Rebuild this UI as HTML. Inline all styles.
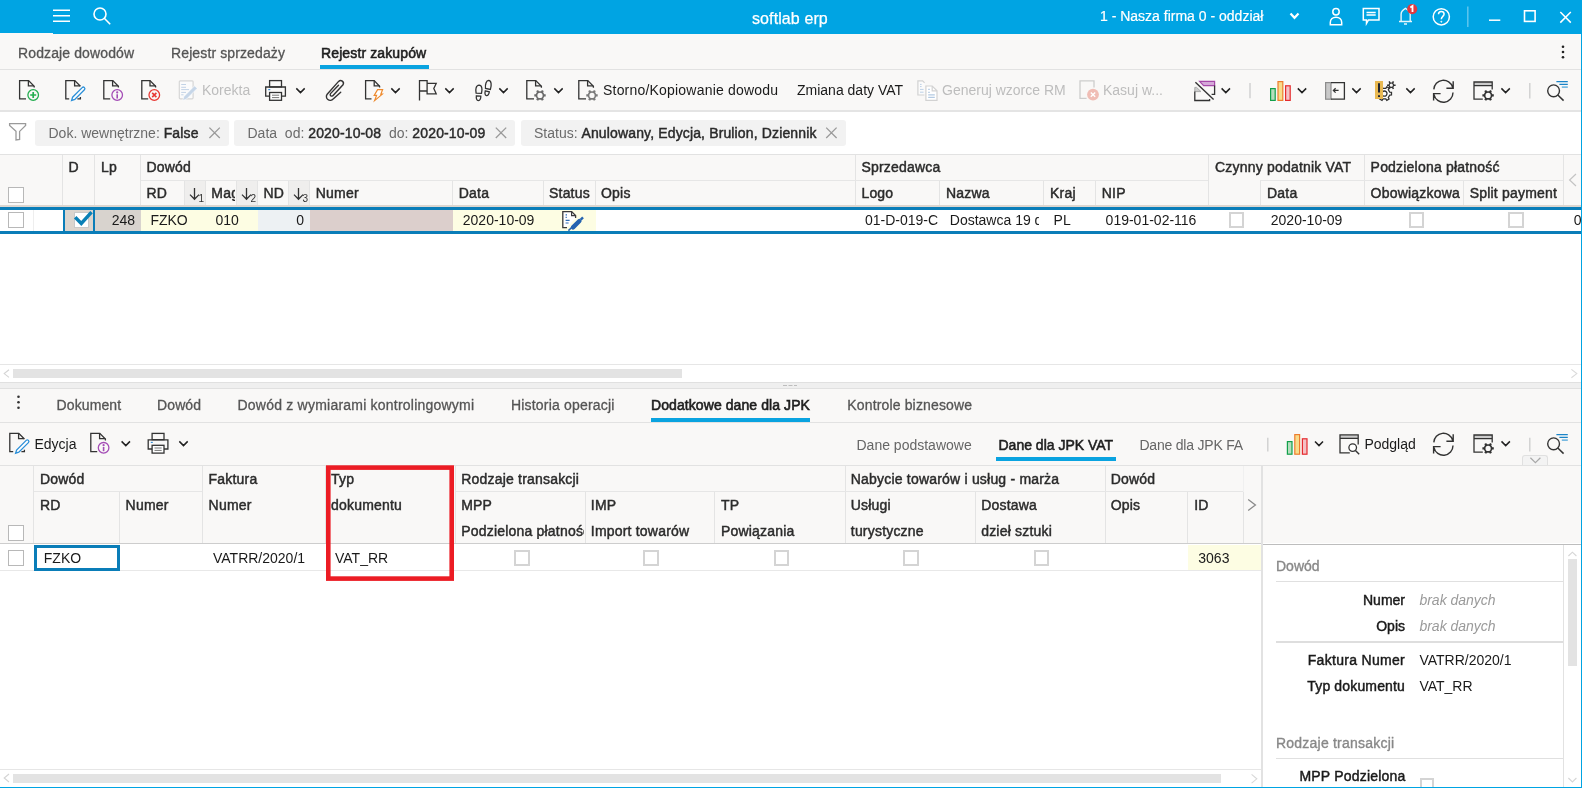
<!DOCTYPE html>
<html><head><meta charset="utf-8">
<style>
*{margin:0;padding:0;box-sizing:border-box}
html,body{width:1582px;height:788px;overflow:hidden;background:#fff}
body{will-change:transform}
body{position:relative;font-family:"Liberation Sans",sans-serif;font-size:14px;color:#1a1a1a}
.a{position:absolute}
.t{position:absolute;white-space:nowrap;line-height:16px;font-size:14px}
.m{-webkit-text-stroke:0.45px currentColor}
.hl{position:absolute;height:1px;background:#dedede}
.vl{position:absolute;width:1px;background:#e4e4e4}
.cb{position:absolute;width:16px;height:16px;border:2px solid #cfcfcf;background:#fff}
svg{position:absolute;overflow:visible}
</style></head><body>

<!-- TOP BAR -->
<div class="a" style="left:0;top:0;width:1582px;height:34px;background:#00a4e3"></div>
<div class="a" style="left:0;top:33px;width:53px;height:1px;background:#f9f8f7"></div>
<svg style="left:0;top:0" width="1582" height="34" fill="none" stroke="#fff" stroke-width="1.6">
 <path d="M53 10.2H70M53 15.8H70M53 21.3H70"/>
 <circle cx="100" cy="14" r="6"/><path d="M104.3 18.3L110.2 24.2"/>
 <path d="M1290.5 13.5L1294.5 17.8L1298.5 13.5" stroke-width="2.2"/>
 <circle cx="1336" cy="11.8" r="3.2" stroke-width="1.5"/>
 <path d="M1330.3 24.8V22.5C1330.3 19.2 1332.8 17.2 1336 17.2S1341.7 19.2 1341.7 22.5V24.8Z" stroke-width="1.5"/>
 <path d="M1363.3 8.5H1379V20H1368.5L1366.5 23.5V20H1363.3Z" stroke-width="1.5"/>
 <path d="M1366.5 12.5H1375.7M1366.5 15H1375.7" stroke-width="1.5"/>
 <path d="M1399 21.5H1412M1401.1 21.5V14.2C1401.1 11.6 1402.6 10 1405.4 8.4C1408.2 10 1410.2 11.6 1410.2 14.2V21.5M1404 24H1407" stroke-width="1.4" stroke="#e6f6fc"/>
 <circle cx="1441.3" cy="16.8" r="8.1" stroke-width="1.5"/>
 <path d="M1438.5 14.3C1438.5 12.6 1439.8 11.4 1441.3 11.4S1444.1 12.5 1444.1 14.1C1444.1 16.4 1441.3 16.5 1441.3 19.2" stroke-width="1.5"/>
 <circle cx="1441.3" cy="21.7" r="0.5" fill="#fff" stroke-width="1"/>
 <path d="M1467.8 6.5V27" stroke="#5fc6ee" stroke-width="1.5"/>
 <path d="M1489 20.2H1500.3" stroke-width="1.5"/>
 <rect x="1524.5" y="10.8" width="10.6" height="10.6" stroke-width="1.6"/>
 <path d="M1560.3 12L1570.8 22.6M1570.8 12L1560.3 22.6" stroke-width="1.5"/>
</svg>
<svg style="left:0;top:0" width="1582" height="34">
 <circle cx="1412.2" cy="9.1" r="5.1" fill="#e0393e"/>
 <path d="M1410.3 7.4L1412.5 6V12" fill="none" stroke="#fff" stroke-width="1.8"/>
</svg>
<div class="t" style="left:752px;top:9.5px;font-size:16px;line-height:18px;color:#fff;letter-spacing:0.1px;-webkit-text-stroke:0.25px #fff">softlab erp</div>
<div class="t m" style="left:1100px;top:8px;color:#fff;-webkit-text-stroke:0.2px #fff">1 - Nasza firma 0 - oddział</div>

<!-- TAB BAR 1 -->
<div class="a" style="left:0;top:34px;width:1581px;height:36px;background:#f9f8f7"></div>
<div class="hl" style="left:0;top:69px;width:1581px;background:#e2e2e2"></div>
<div class="t" style="left:18px;top:45px;color:#555;letter-spacing:0.12px;-webkit-text-stroke:0.3px #555">Rodzaje dowodów</div>
<div class="t" style="left:171px;top:45px;color:#555;letter-spacing:0.12px;-webkit-text-stroke:0.3px #555">Rejestr sprzedaży</div>
<div class="t m" style="left:321px;top:45px;color:#1e1e1e;-webkit-text-stroke:0.55px #1e1e1e;letter-spacing:0.12px">Rejestr zakupów</div>
<div class="a" style="left:320px;top:65px;width:109px;height:4px;background:#0aa3e0"></div>

<!-- TOOLBAR 1 -->
<div class="a" style="left:0;top:70px;width:1581px;height:40px;background:#f9f8f7"></div>
<div class="a" style="left:0;top:110px;width:1581px;height:2px;background:#e4e4e4"></div>
<svg style="left:0;top:0;width:0;height:0">
 <defs>
  <path id="dfold" d="M9.4 0.6V5.8H15" />
  <g id="gear"><path fill-rule="evenodd" stroke="none" d="M4.24 -1.16 L5.70 -1.06 L5.70 1.06 L4.24 1.16 L3.13 3.09 L3.77 4.41 L1.94 5.47 L1.12 4.26 L-1.12 4.26 L-1.94 5.47 L-3.77 4.41 L-3.13 3.09 L-4.24 1.16 L-5.70 1.06 L-5.70 -1.06 L-4.24 -1.16 L-3.13 -3.09 L-3.77 -4.41 L-1.94 -5.47 L-1.12 -4.26 L1.12 -4.26 L1.94 -5.47 L3.77 -4.41 L3.13 -3.09ZM2.60 0.00A2.6 2.6 0 1 0 -2.60 0.00A2.6 2.6 0 1 0 2.60 0.00Z"/></g>
 </defs>
</svg>
<svg style="left:0;top:70px" width="1582" height="42" fill="none" stroke="#333" stroke-width="1.3">
 <g transform="translate(0,-70)">
 <!-- new doc -->
 <g transform="translate(19,80)"><path d="M7 18.8H0.6V0.6H9.6L15.2 6.2V7.6"/><use href="#dfold"/></g>
 <circle cx="33.2" cy="95" r="5.3" stroke="#22ad4f" stroke-width="1.3"/>
 <path d="M30.2 95H36.2M33.2 92V98" stroke="#22ad4f" stroke-width="1.7"/>
 <!-- edit doc -->
 <g transform="translate(65.2,80)"><path d="M4 18.8H0.6V0.6H9.6L15.2 6.2"/><use href="#dfold"/><path d="M12.2 18.8H15.2V17"/></g>
 <path d="M71.6 100.4L72.6 97.2L82.2 87.6A1.3 1.3 0 0 1 84.4 89.8L74.8 99.4Z" stroke="#2b8fd8" stroke-width="1.3" fill="#fff"/>
 <!-- info doc -->
 <g transform="translate(103.2,80)"><path d="M7 18.8H0.6V0.6H9.6L15.2 6.2V7.6"/><use href="#dfold"/></g>
 <circle cx="117.2" cy="95" r="5.3" stroke="#a44db6"/>
 <path d="M117.2 94.2V98.4" stroke="#a44db6" stroke-width="1.6"/><circle cx="117.2" cy="92.4" r="0.5" stroke="#a44db6" stroke-width="1.2"/>
 <!-- delete doc -->
 <g transform="translate(141.2,80)"><path d="M7 18.8H0.6V0.6H8.8L14.4 6.2V7.6"/><path d="M8.8 0.6V5.8H14.4"/></g>
 <circle cx="154.3" cy="95" r="5.3" stroke="#e83a35"/>
 <path d="M152.2 92.9L156.4 97.1M156.4 92.9L152.2 97.1" stroke="#e83a35" stroke-width="1.6"/>
 <!-- korekta -->
 <rect x="179.3" y="80.8" width="13.8" height="18" rx="1" stroke="#d6d6d6" stroke-width="1.2" fill="#fbfbfb"/>
 <path d="M181.2 84.5H186M181.2 87.3H186M181.2 89.6H189M181.2 92.4H186M181.2 94.8H183.5" stroke="#c3d3e6" stroke-width="1"/>
 <path d="M182.6 100.6L184 96.4L194.6 85.8L197.2 88.4L186.6 99Z" fill="#c6d6e8" stroke="#fff" stroke-width="0.6"/>
 <!-- printer -->
 <rect x="269.6" y="80.6" width="11.9" height="6.3"/>
 <path d="M269.6 96.2H265.7V87H285.4V96.2H281.5"/>
 <rect x="269.6" y="92.5" width="11.9" height="7.8" fill="#fff"/>
 <path d="M272 95.2H279.2M272 97.6H279.2" stroke="#777" stroke-width="1"/>
 <path d="M268.3 89.6H270.3" stroke="#3a8fd6" stroke-width="1.2"/>
 <!-- paperclip -->
 <path d="M340.7 92.3L333.2 98.9A3.8 3.8 0 0 1 327.2 94.2L338.6 81.4A2.8 2.8 0 0 1 343 84.8L333.1 95.5A1.6 1.6 0 0 1 330.5 93.6L338.5 85.3" stroke-width="1.4" stroke-linecap="round"/>
 <!-- doc lightning -->
 <g transform="translate(365,80)"><path d="M6.5 18.8H0.6V0.6H9.2L14.6 6.2V7.6"/><path d="M9.2 0.6V5.8H14.6"/></g>
 <path d="M377.6 89.6H382.6L380.8 94.2H382.3L374.6 100.6L376.6 95.4H374.2Z" stroke="#ee8a2e" stroke-width="1.2" fill="#fff"/>
 <!-- flag -->
 <path d="M419.5 100.6V80.6H427.1V91H419.5M427.1 83.4H436.2L433.8 88.6L436.2 93.8H427.1V91"/>
 <!-- footprints -->
 <path d="M476.1 93.2C475.3 89.6 475.9 85.4 479.1 85.2C482.1 85.2 482.5 89.4 481.5 93.4Z"/>
 <path d="M476.4 95.8L480.8 96.2C480.9 98.6 480 100.6 478.4 100.6C476.6 100.6 476 98.2 476.4 95.8Z"/>
 <path d="M485.5 88.4C485.1 84.6 486.1 80.6 488.7 80.4C491.5 80.6 491.7 85.4 490.4 89.4Z"/>
 <path d="M485.3 90.8L489.3 91.8C489.1 94.2 488 95.8 486.4 95.6C484.8 95.4 484.7 93 485.3 90.8Z"/>
 <!-- doc gear -->
 <g transform="translate(526.2,80)"><path d="M7.8 18.8H0.6V0.6H9.6L15.2 6.2V7.8"/><use href="#dfold"/></g>
 <g transform="translate(540,95.4)" fill="#6a6a6a"><use href="#gear"/></g>
 <!-- doc gear 2 -->
 <g transform="translate(578.2,80)"><path d="M7.8 18.8H0.6V0.6H9.6L15.2 6.2V7.8"/><use href="#dfold"/></g>
 <g transform="translate(592,95.4)" fill="#7a7a7a"><use href="#gear"/></g>
 <!-- chevrons -->
 <path d="M296.3 88.4L300.5 92.6L304.7 88.4M391.3 88.4L395.5 92.6L399.7 88.4M445.3 88.4L449.5 92.6L453.7 88.4M499.3 88.4L503.5 92.6L507.7 88.4M554.3 88.4L558.5 92.6L562.7 88.4M1221.6 88.4L1225.8 92.6L1230 88.4M1297.8 88.4L1302 92.6L1306.2 88.4M1352.3 88.4L1356.5 92.6L1360.7 88.4M1406.3 88.4L1410.5 92.6L1414.7 88.4M1501.4 88.4L1505.6 92.6L1509.8 88.4" stroke="#222" stroke-width="1.5"/>
 <!-- generuj -->
 <path d="M924.4 95H917.9V80.8H922.6L924.6 82.8" stroke="#d2d2d2" stroke-width="1.2" fill="#fbfbfb"/>
 <path d="M920 84.4H921.6M920 86.6H921.6M920 89.4H923.6M920 92.2H923.6" stroke="#bcd0e6" stroke-width="1"/>
 <path d="M925.9 100.3V86H932.2L937 90.8V100.3Z" stroke="#d2d2d2" stroke-width="1.2" fill="#fff"/>
 <path d="M932.2 86V90.8H937" stroke="#d2d2d2" stroke-width="1.2"/>
 <path d="M928.2 89.4H929.8M928.2 92.4H929.8M928.2 94.8H934.8M928.2 97.4H934.8" stroke="#b4cae2" stroke-width="1.2"/>
 <!-- kasuj -->
 <path d="M1086.6 98.4H1080V80.8H1094V87.4" stroke="#cdcdcd" stroke-width="1.3"/>
 <circle cx="1093" cy="94.6" r="5.9" fill="#f0bdb5" stroke="none"/>
 <path d="M1090.8 92.4L1095.2 96.8M1095.2 92.4L1090.8 96.8" stroke="#fff" stroke-width="1.4"/>
 <!-- calendar slash -->
 <path d="M1199.6 81.4H1214.6V85.6H1203.6Z" fill="#d5a9d8" stroke="#a64aa9" stroke-width="1.2"/>
 <path d="M1214.6 85.6V94.4H1211.6" stroke-width="1.3"/>
 <path d="M1194.8 87.4H1196.6L1201 91.6H1194.8Z" fill="#ccc" stroke="#aaa" stroke-width="1"/>
 <path d="M1194.8 91.6V100.5H1209.6V99" stroke-width="1.3"/>
 <path d="M1195.4 82.2L1213.6 99.6" stroke-width="1.4"/>
 <!-- separators -->
 <path d="M1250 83V98.2M1529.8 83V98.6" stroke="#cfcfcf" stroke-width="1.4"/>
 <!-- chart -->
 <rect x="1270.6" y="88.6" width="4.6" height="11.8" fill="#b6ddbd" stroke="#12a04b" stroke-width="1.2"/>
 <rect x="1278" y="81.6" width="4.8" height="18.8" fill="#f8dc8a" stroke="#ed7d2e" stroke-width="1.2"/>
 <rect x="1285.6" y="85.8" width="4.6" height="14.6" fill="#f4c1c4" stroke="#e52a2e" stroke-width="1.2"/>
 <!-- panel -->
 <rect x="1325.6" y="82.6" width="5.4" height="16.6" fill="#c9c9c9" stroke="#8c8c8c" stroke-width="1.2"/>
 <path d="M1331 82.6H1344.4V99.2H1331" stroke="#333" stroke-width="1.3"/>
 <path d="M1333.6 90.4H1338.6M1335.6 88.2L1333.4 90.4L1335.6 92.6" stroke="#333" stroke-width="1.3"/>
 <!-- alert gear -->
 <g transform="translate(1384.4,93.6)" stroke="#333" stroke-width="1.3" fill="#fff"><path d="M5.31 -1.45 L7.08 -1.31 L7.08 1.31 L5.31 1.45 L3.91 3.87 L4.68 5.47 L2.40 6.79 L1.40 5.32 L-1.40 5.32 L-2.40 6.79 L-4.68 5.47 L-3.91 3.87 L-5.31 1.45 L-7.08 1.31 L-7.08 -1.31 L-5.31 -1.45 L-3.91 -3.87 L-4.68 -5.47 L-2.40 -6.79 L-1.40 -5.32 L1.40 -5.32 L2.40 -6.79 L4.68 -5.47 L3.91 -3.87Z"/><circle r="2.6"/></g>
 <g transform="translate(1391.3,85.2)" fill="#333"><path fill-rule="evenodd" d="M2.80 -0.77 L4.33 -0.80 L4.33 0.80 L2.80 0.77 L2.06 2.04 L2.86 3.35 L1.47 4.15 L0.74 2.81 L-0.74 2.81 L-1.47 4.15 L-2.86 3.35 L-2.06 2.04 L-2.80 0.77 L-4.33 0.80 L-4.33 -0.80 L-2.80 -0.77 L-2.06 -2.04 L-2.86 -3.35 L-1.47 -4.15 L-0.74 -2.81 L0.74 -2.81 L1.47 -4.15 L2.86 -3.35 L2.06 -2.04ZM1.60 0.00A1.6 1.6 0 1 0 -1.60 0.00A1.6 1.6 0 1 0 1.60 0.00Z" stroke="none"/></g>
 <rect x="1375" y="81" width="8" height="18" fill="#e9b952" stroke="none"/>
 <path d="M1379 83.2V92.4M1379 95.2V97" stroke="#1e2433" stroke-width="2"/>
 <!-- refresh -->
 <path d="M1433.8 89.4A9.6 9.6 0 0 1 1452.6 87.2M1453.2 81.2V88.2H1446.4" stroke-width="1.4"/>
 <path d="M1453 92.6A9.6 9.6 0 0 1 1434 94.6M1433.6 100.6V93.6H1440.6" stroke-width="1.4"/>
 <!-- window gear -->
 <rect x="1474" y="82" width="18.2" height="3.6" fill="#cbcbcb" stroke="none"/>
 <path d="M1482.8 99.2H1474V82H1492.2V89.4M1474 85.6H1492.2" stroke-width="1.3"/>
 <g transform="translate(1488.1,95.4)" fill="#333"><use href="#gear"/></g>
 <!-- search filter -->
 <circle cx="1553.6" cy="90.8" r="5.9" stroke-width="1.4"/>
 <path d="M1557.8 95L1563.6 100.6" stroke-width="1.5"/>
 <path d="M1556.4 81.6H1567.8M1559.4 84.4H1567.8" stroke="#1a84c8" stroke-width="1.3"/>
 <path d="M1561.8 87.1H1567.8" stroke="#4ea6da" stroke-width="1.3"/>
 </g>
</svg>
<div class="t" style="left:202px;top:82px;color:#bdbdbd">Korekta</div>
<div class="t" style="left:603px;top:82px;color:#1a1a1a;letter-spacing:0.2px">Storno/Kopiowanie dowodu</div>
<div class="t" style="left:797px;top:82px;color:#1a1a1a">Zmiana daty VAT</div>
<div class="t" style="left:942px;top:82px;color:#bdbdbd">Generuj wzorce RM</div>
<div class="t" style="left:1103px;top:82px;color:#bdbdbd">Kasuj w...</div>

<!-- kebab 1 -->
<svg style="left:1560px;top:44px" width="6" height="16"><circle cx="3" cy="2.8" r="1.3" fill="#222"/><circle cx="3" cy="8" r="1.3" fill="#222"/><circle cx="3" cy="13.2" r="1.3" fill="#222"/></svg>

<!-- FILTER BAR -->
<div class="hl" style="left:0;top:154px;width:1581px;background:#e2e2e2"></div>
<svg style="left:0;top:112px" width="30" height="40" fill="none" stroke="#9a9a9a" stroke-width="1.3">
 <path d="M9.6 11.6H25.6V13.4L19.6 19.4V27.4L16 28V19.4L9.6 13.4Z"/>
</svg>
<div class="a" style="left:35px;top:120px;width:194px;height:26px;background:#f2f2f2;border-radius:3px"></div>
<div class="a" style="left:234px;top:120px;width:281px;height:26px;background:#f2f2f2;border-radius:3px"></div>
<div class="a" style="left:521px;top:120px;width:325px;height:26px;background:#f2f2f2;border-radius:3px"></div>
<div class="t" style="left:48.5px;top:125px;color:#6b6b6b">Dok. wewnętrzne: <span class="m" style="color:#2a2a2a;letter-spacing:0.14px">False</span></div>
<div class="t" style="left:247.5px;top:125px;color:#6b6b6b">Data&nbsp; od: <span class="m" style="color:#2a2a2a;letter-spacing:0.14px">2020-10-08</span>&nbsp; do: <span class="m" style="color:#2a2a2a;letter-spacing:0.14px">2020-10-09</span></div>
<div class="t" style="left:534px;top:125px;color:#6b6b6b">Status: <span class="m" style="color:#2a2a2a;letter-spacing:0.14px">Anulowany, Edycja, Brulion, Dziennik</span></div>
<svg style="left:0;top:112px" width="900" height="40" fill="none" stroke="#9a9a9a" stroke-width="1.3">
 <path d="M209.4 15.6L219.8 26M219.8 15.6L209.4 26M495.8 15.6L506.2 26M506.2 15.6L495.8 26M826.2 15.6L836.6 26M836.6 15.6L826.2 26"/>
</svg>

<!-- GRID 1 -->
<div class="a" style="left:0;top:155px;width:1581px;height:51px;background:#f9f8f7"></div>
<div class="a" style="left:184px;top:181px;width:21px;height:24px;background:#efeeed"></div>
<div class="a" style="left:236px;top:181px;width:21px;height:24px;background:#efeeed"></div>
<div class="a" style="left:288px;top:181px;width:21px;height:24px;background:#efeeed"></div>
<div class="a" style="left:0;top:205px;width:1581px;height:2px;background:#dcd6d0"></div>
<!-- header lines -->
<div class="vl" style="left:62px;top:155px;height:50px"></div>
<div class="vl" style="left:94px;top:155px;height:50px"></div>
<div class="vl" style="left:140px;top:155px;height:50px"></div>
<div class="vl" style="left:855px;top:155px;height:50px"></div>
<div class="vl" style="left:1208px;top:155px;height:50px"></div>
<div class="vl" style="left:1364px;top:155px;height:50px"></div>
<div class="vl" style="left:1563px;top:155px;height:50px"></div>
<div class="hl" style="left:141px;top:180px;width:1067px;background:#e6e6e6"></div>
<div class="hl" style="left:1260px;top:180px;width:303px;background:#e6e6e6"></div>
<div class="vl" style="left:184px;top:181px;height:24px"></div>
<div class="vl" style="left:205px;top:181px;height:24px"></div>
<div class="vl" style="left:236px;top:181px;height:24px"></div>
<div class="vl" style="left:257px;top:181px;height:24px"></div>
<div class="vl" style="left:288px;top:181px;height:24px"></div>
<div class="vl" style="left:309px;top:181px;height:24px"></div>
<div class="vl" style="left:452px;top:181px;height:24px"></div>
<div class="vl" style="left:543px;top:181px;height:24px"></div>
<div class="vl" style="left:595px;top:181px;height:24px"></div>
<div class="vl" style="left:939px;top:181px;height:24px"></div>
<div class="vl" style="left:1043px;top:181px;height:24px"></div>
<div class="vl" style="left:1095px;top:181px;height:24px"></div>
<div class="vl" style="left:1260px;top:181px;height:24px"></div>
<div class="vl" style="left:1463px;top:181px;height:24px"></div>
<div class="cb" style="left:8px;top:187px;border-width:1.5px;border-color:#b8b8b8"></div>
<!-- header text -->
<div class="t m" style="left:68.5px;top:159px;color:#2b2b2b;letter-spacing:0.2px">D</div>
<div class="t m" style="left:101px;top:159px;color:#2b2b2b;letter-spacing:0.2px">Lp</div>
<div class="t m" style="left:146.4px;top:159px;color:#2b2b2b;letter-spacing:0.2px">Dowód</div>
<div class="t m" style="left:861.4px;top:159px;color:#2b2b2b;letter-spacing:0.2px">Sprzedawca</div>
<div class="t m" style="left:1215px;top:159px;color:#2b2b2b;letter-spacing:0.2px">Czynny podatnik VAT</div>
<div class="t m" style="left:1370.6px;top:159px;color:#2b2b2b;letter-spacing:0.2px">Podzielona płatność</div>
<div class="t m" style="left:146.4px;top:185px;color:#2b2b2b;letter-spacing:0.2px">RD</div>
<div class="t m" style="left:211.3px;top:185px;color:#2b2b2b;letter-spacing:0.2px;width:24px;overflow:hidden">Mag</div>
<div class="t m" style="left:263.5px;top:185px;color:#2b2b2b;letter-spacing:0.2px">ND</div>
<div class="t m" style="left:315.8px;top:185px;color:#2b2b2b;letter-spacing:0.2px">Numer</div>
<div class="t m" style="left:458.8px;top:185px;color:#2b2b2b;letter-spacing:0.2px">Data</div>
<div class="t m" style="left:549px;top:185px;color:#2b2b2b;letter-spacing:0.2px">Status</div>
<div class="t m" style="left:601px;top:185px;color:#2b2b2b;letter-spacing:0.2px">Opis</div>
<div class="t m" style="left:861.4px;top:185px;color:#2b2b2b;letter-spacing:0.2px">Logo</div>
<div class="t m" style="left:946px;top:185px;color:#2b2b2b;letter-spacing:0.2px">Nazwa</div>
<div class="t m" style="left:1050px;top:185px;color:#2b2b2b;letter-spacing:0.2px">Kraj</div>
<div class="t m" style="left:1101.8px;top:185px;color:#2b2b2b;letter-spacing:0.2px">NIP</div>
<div class="t m" style="left:1267px;top:185px;color:#2b2b2b;letter-spacing:0.2px">Data</div>
<div class="t m" style="left:1370.6px;top:185px;color:#2b2b2b;letter-spacing:0.2px">Obowiązkowa</div>
<div class="t m" style="left:1469.7px;top:185px;color:#2b2b2b;letter-spacing:0.2px">Split payment</div>
<svg style="left:0;top:150px" width="1582" height="60" fill="none" stroke="#333" stroke-width="1.3">
 <g transform="translate(0,-150)">
 <path d="M194.5 188V199M190 194.6L194.5 199.2L199 194.6M246.5 188V199M242 194.6L246.5 199.2L251 194.6M298.5 188V199M294 194.6L298.5 199.2L303 194.6"/>
 <path d="M1576 174L1569.6 180L1576 186" stroke="#c4c4c4" stroke-width="1.2"/>
 </g>
</svg>
<div class="a" style="left:198.5px;top:193px;font-size:10px;line-height:12px;color:#333">1</div>
<div class="a" style="left:250.5px;top:193px;font-size:10px;line-height:12px;color:#333">2</div>
<div class="a" style="left:302.5px;top:193px;font-size:10px;line-height:12px;color:#333">3</div>

<!-- ROW 1 -->
<div class="a" style="left:33px;top:210px;width:1px;height:21px;background:#eee"></div>
<div class="cb" style="left:8px;top:212px;border-width:1.5px;border-color:#b8b8b8"></div>
<div class="a" style="left:65px;top:210px;width:28px;height:21px;background:#dcd5ce"></div>
<div class="a" style="left:95px;top:210px;width:45.5px;height:21px;background:#d8d3ce"></div>
<div class="a" style="left:140.5px;top:210px;width:117px;height:21px;background:#fdfde3"></div>
<div class="a" style="left:257.5px;top:210px;width:52px;height:21px;background:#edf1f3"></div>
<div class="a" style="left:309.5px;top:210px;width:143px;height:21px;background:#dccfcc"></div>
<div class="a" style="left:452.5px;top:210px;width:143px;height:21px;background:#fdfde3"></div>
<div class="a" style="left:0;top:207px;width:1581px;height:3px;background:#0a7db8"></div>
<div class="a" style="left:0;top:231px;width:1581px;height:3px;background:#0a7db8"></div>
<div class="a" style="left:63px;top:210px;width:2px;height:21px;background:#0a7db8"></div>
<div class="a" style="left:93px;top:210px;width:2px;height:21px;background:#0a7db8"></div>
<div class="cb" style="left:73.5px;top:212px;width:15.5px;height:15.8px;border-width:1.5px;border-color:#c9c9c9"></div>
<svg style="left:60px;top:204px" width="40" height="32"><path d="M76.4 218.4L81.3 223.4L90.4 213.4" transform="translate(-60,-204)" fill="none" stroke="#0a80b6" stroke-width="3.4" stroke-linecap="square"/></svg>
<div class="t" style="left:95px;top:212px;width:40px;text-align:right;color:#1a1a1a">248</div>
<div class="t" style="left:150.4px;top:212px;color:#1a1a1a">FZKO</div>
<div class="t" style="left:215.5px;top:212px;color:#1a1a1a">010</div>
<div class="t" style="left:264px;top:212px;width:40px;text-align:right;color:#1a1a1a">0</div>
<div class="t" style="left:462.8px;top:212px;color:#1a1a1a">2020-10-09</div>
<svg style="left:550px;top:204px" width="50" height="32" fill="none">
 <g transform="translate(-550,-204)">
 <path d="M567 227.6H562.8V211.6H571.6L575.6 215.6V218" stroke="#3a3a3a" stroke-width="1.3" fill="#fff"/>
 <path d="M571.6 211.6V215.6H575.6" stroke="#3a3a3a" stroke-width="1.2"/>
 <path d="M565.6 214.8H567M565.6 217.4H566.8M565.6 220.4H569.6M565.6 223H568.6" stroke="#2e6bb5" stroke-width="1.2"/>
 <path d="M573 227.4L579.4 221" stroke="#2563b0" stroke-width="4.4" stroke-linecap="round"/>
 <path d="M568.4 230.6L572.2 227" stroke="#2563b0" stroke-width="1.5"/>
 <path d="M580.8 219.6L583 217.4" stroke="#2563b0" stroke-width="2.4"/>
 </g>
</svg>
<div class="t" style="left:865px;top:212px;color:#1a1a1a">01-D-019-C</div>
<div class="t" style="left:949.8px;top:212px;width:89px;overflow:hidden;color:#1a1a1a">Dostawca 19 d</div>
<div class="t" style="left:1053.6px;top:212px;color:#1a1a1a">PL</div>
<div class="t" style="left:1105.6px;top:212px;color:#1a1a1a">019-01-02-116</div>
<div class="cb" style="left:1228.5px;top:212px;width:15.5px;height:15.5px;border-width:2px;border-color:#d4d4d4"></div>
<div class="t" style="left:1270.8px;top:212px;color:#1a1a1a">2020-10-09</div>
<div class="cb" style="left:1408.5px;top:212px;width:15.5px;height:15.5px;border-width:2px;border-color:#d4d4d4"></div>
<div class="cb" style="left:1508.3px;top:212px;width:15.5px;height:15.5px;border-width:2px;border-color:#d4d4d4"></div>
<div class="t" style="left:1573.7px;top:212px;width:7px;overflow:hidden;color:#1a1a1a">0</div>

<!-- SCROLL 1 -->
<div class="hl" style="left:0;top:364px;width:1581px;background:#e6e6e6"></div>
<div class="a" style="left:13px;top:369px;width:669px;height:9px;background:#e3e3e3"></div>
<div class="hl" style="left:0;top:382px;width:1581px;background:#e0e0e0"></div>
<div class="a" style="left:0;top:383px;width:1581px;height:5px;background:#efefef"></div>
<div class="hl" style="left:0;top:388px;width:1581px;background:#e0e0e0"></div>

<!-- TAB BAR 2 -->
<div class="a" style="left:0;top:389px;width:1581px;height:33px;background:#f9f8f7"></div>
<div class="hl" style="left:0;top:422px;width:1581px;background:#e2e2e2"></div>

<svg style="left:0;top:360px" width="1582" height="60">
 <g transform="translate(0,-360)">
 <path d="M9 369.8L4.2 373.6L9 377.4" fill="none" stroke="#d4d4d4" stroke-width="1.1"/>
 <path d="M1571.4 369.4L1576.8 373.6L1571.4 377.8" fill="none" stroke="#dadada" stroke-width="1.1"/>
 <path d="M783 385.5H787M788.5 385.5H792.5M794 385.5H797" stroke="#bdbdbd" stroke-width="1"/>
 <circle cx="18.5" cy="396.8" r="1.3" fill="#333"/><circle cx="18.5" cy="402.2" r="1.3" fill="#333"/><circle cx="18.5" cy="407.7" r="1.3" fill="#333"/>
 </g>
</svg>
<div class="t" style="left:56.5px;top:397px;color:#555;letter-spacing:0.12px;-webkit-text-stroke:0.3px #555">Dokument</div>
<div class="t" style="left:157px;top:397px;color:#555;letter-spacing:0.12px;-webkit-text-stroke:0.3px #555">Dowód</div>
<div class="t" style="left:237.5px;top:397px;color:#555;letter-spacing:0.22px;-webkit-text-stroke:0.3px #555">Dowód z wymiarami kontrolingowymi</div>
<div class="t" style="left:511px;top:397px;color:#555;letter-spacing:0.19px;-webkit-text-stroke:0.3px #555">Historia operacji</div>
<div class="t m" style="left:651px;top:397px;color:#1e1e1e;-webkit-text-stroke:0.6px #1e1e1e;letter-spacing:0.08px">Dodatkowe dane dla JPK</div>
<div class="t" style="left:847.3px;top:397px;color:#555;letter-spacing:0.15px;-webkit-text-stroke:0.3px #555">Kontrole biznesowe</div>
<div class="a" style="left:651px;top:418px;width:159px;height:4px;background:#0aa3e0"></div>

<!-- TOOLBAR 2 -->
<div class="a" style="left:0;top:423px;width:1581px;height:42px;background:#f9f8f7"></div>
<div class="hl" style="left:0;top:465px;width:1581px;background:#e2e2e2"></div>
<div class="t" style="left:34.4px;top:436px;color:#1a1a1a">Edycja</div>
<div class="t" style="left:856.5px;top:437px;color:#666">Dane podstawowe</div>
<div class="t m" style="left:998.5px;top:437px;color:#1e1e1e;-webkit-text-stroke:0.55px #1e1e1e">Dane dla JPK VAT</div>
<div class="a" style="left:996px;top:457px;width:120px;height:4px;background:#0aa3e0"></div>
<div class="t" style="left:1139.4px;top:437px;color:#666;letter-spacing:-0.2px">Dane dla JPK FA</div>
<div class="t" style="left:1364.4px;top:436px;color:#1a1a1a">Podgląd</div>
<div class="a" style="left:1522px;top:455px;width:26px;height:10px;background:#f3f3f3;border:1px solid #e0e0e0;border-bottom:none;border-radius:3px 3px 0 0"></div>
<svg style="left:0;top:423px" width="1582" height="42" fill="none" stroke="#333" stroke-width="1.3">
 <g transform="translate(0,-423)">
 <!-- edit doc -->
 <g transform="translate(9.2,432.8)"><path d="M4 18.8H0.6V0.6H9.6L15.2 6.2"/><use href="#dfold"/><path d="M12.2 18.8H15.2V17"/></g>
 <path d="M15.6 453.2L16.6 450L26.2 440.4A1.3 1.3 0 0 1 28.4 442.6L18.8 452.2Z" stroke="#2b8fd8" stroke-width="1.3" fill="#fff"/>
 <!-- info doc -->
 <g transform="translate(90.2,432.8)"><path d="M7 18.8H0.6V0.6H9.6L15.2 6.2V7.6"/><use href="#dfold"/></g>
 <circle cx="103.6" cy="447.8" r="5.3" stroke="#a44db6"/>
 <path d="M103.6 447V451.2" stroke="#a44db6" stroke-width="1.6"/><circle cx="103.6" cy="445.2" r="0.5" stroke="#a44db6" stroke-width="1.2"/>
 <!-- printer -->
 <rect x="152.1" y="433.4" width="11.9" height="6.3"/>
 <path d="M152.1 449H148.2V439.8H167.9V449H164"/>
 <rect x="152.1" y="445.3" width="11.9" height="7.8" fill="#fff"/>
 <path d="M154.5 448H161.7M154.5 450.4H161.7" stroke="#777" stroke-width="1"/>
 <path d="M150.8 442.4H152.8" stroke="#3a8fd6" stroke-width="1.2"/>
 <path d="M121.6 441.4L125.8 445.6L130 441.4M179.3 441.4L183.5 445.6L187.7 441.4M1315 441.4L1319 445.6L1323 441.4M1501.5 441.4L1505.7 445.6L1509.9 441.4" stroke="#222" stroke-width="1.5"/>
 <path d="M1530.4 457.8L1535.4 462.6L1540.4 457.8" stroke="#a8a8a8" stroke-width="1.2"/>
 <!-- separators -->
 <path d="M1267.8 437.8V451.6M1529.8 437.8V451.6" stroke="#cfcfcf" stroke-width="1.4"/>
 <!-- chart -->
 <rect x="1287.4" y="441.6" width="4.6" height="12.6" fill="#b6ddbd" stroke="#12a04b" stroke-width="1.2"/>
 <rect x="1294.8" y="434.6" width="4.8" height="19.6" fill="#f8dc8a" stroke="#ed7d2e" stroke-width="1.2"/>
 <rect x="1302.4" y="438.8" width="4.6" height="15.4" fill="#f4c1c4" stroke="#e52a2e" stroke-width="1.2"/>
 <!-- preview -->
 <rect x="1340" y="435" width="18.2" height="3.4" fill="#cbcbcb" stroke="none"/>
 <path d="M1349.8 452.8H1340V434.8H1358.2V444.4M1340 438.4H1358.2" stroke-width="1.3"/>
 <circle cx="1352.7" cy="447.6" r="3.8" fill="#fff" stroke-width="1.3"/>
 <path d="M1355.4 450.4L1359.2 454.2" stroke-width="1.4"/>
 <!-- refresh -->
 <path d="M1433.8 442.4A9.6 9.6 0 0 1 1452.6 440.2M1453.2 434.2V441.2H1446.4" stroke-width="1.4"/>
 <path d="M1453 445.6A9.6 9.6 0 0 1 1434 447.6M1433.6 453.6V446.6H1440.6" stroke-width="1.4"/>
 <!-- window gear -->
 <rect x="1474" y="435" width="18.2" height="3.6" fill="#cbcbcb" stroke="none"/>
 <path d="M1482.8 452.2H1474V435H1492.2V442.4M1474 438.6H1492.2" stroke-width="1.3"/>
 <g transform="translate(1488.1,448.4)" fill="#333"><use href="#gear"/></g>
 <!-- search filter -->
 <circle cx="1553.6" cy="443.8" r="5.9" stroke-width="1.4"/>
 <path d="M1557.8 448L1563.6 453.6" stroke-width="1.5"/>
 <path d="M1556.4 434.6H1567.8M1559.4 437.4H1567.8" stroke="#1a84c8" stroke-width="1.3"/>
 <path d="M1561.8 440.1H1567.8" stroke="#4ea6da" stroke-width="1.3"/>
 </g>
</svg>

<!-- GRID 2 -->
<div class="a" style="left:0;top:466px;width:1581px;height:77px;background:#f9f8f7"></div>
<div class="a" style="left:0;top:543px;width:1262px;height:1px;background:#cdcdcd"></div>
<div class="hl" style="left:0;top:570px;width:1262px;background:#e8e8e8"></div>
<div class="vl" style="left:33px;top:466px;height:77px"></div>
<div class="vl" style="left:202px;top:466px;height:77px"></div>
<div class="vl" style="left:325px;top:466px;height:77px"></div>
<div class="vl" style="left:455px;top:466px;height:77px"></div>
<div class="vl" style="left:845px;top:466px;height:77px"></div>
<div class="vl" style="left:1105px;top:466px;height:77px"></div>
<div class="vl" style="left:1243px;top:466px;height:26px;background:#f0f0f0"></div><div class="vl" style="left:1243px;top:492px;height:51px"></div>
<div class="hl" style="left:34px;top:491px;width:168px;background:#e6e6e6"></div>
<div class="hl" style="left:456px;top:491px;width:787px;background:#e6e6e6"></div>
<div class="vl" style="left:119px;top:492px;height:51px"></div>
<div class="vl" style="left:585px;top:492px;height:51px"></div>
<div class="vl" style="left:714px;top:492px;height:51px"></div>
<div class="vl" style="left:975px;top:492px;height:51px"></div>
<div class="vl" style="left:1187px;top:492px;height:51px"></div>
<div class="cb" style="left:8.4px;top:525px;width:15.5px;height:15.5px;border-width:1.5px;border-color:#b8b8b8"></div>
<div class="t m" style="left:39.9px;top:471px;color:#2b2b2b;letter-spacing:0.2px">Dowód</div>
<div class="t m" style="left:208.6px;top:471px;color:#2b2b2b;letter-spacing:0.2px">Faktura</div>
<div class="t m" style="left:331px;top:471px;color:#2b2b2b;letter-spacing:0.2px">Typ</div>
<div class="t m" style="left:461.2px;top:471px;color:#2b2b2b;letter-spacing:0.2px">Rodzaje transakcji</div>
<div class="t m" style="left:850.8px;top:471px;color:#2b2b2b;letter-spacing:0.2px">Nabycie towarów i usług - marża</div>
<div class="t m" style="left:1110.7px;top:471px;color:#2b2b2b;letter-spacing:0.2px">Dowód</div>
<div class="t m" style="left:39.9px;top:497px;color:#2b2b2b;letter-spacing:0.2px">RD</div>
<div class="t m" style="left:125.6px;top:497px;color:#2b2b2b;letter-spacing:0.2px">Numer</div>
<div class="t m" style="left:208.6px;top:497px;color:#2b2b2b;letter-spacing:0.2px">Numer</div>
<div class="t m" style="left:331px;top:497px;color:#2b2b2b;letter-spacing:0.2px">dokumentu</div>
<div class="t m" style="left:461.2px;top:497px;color:#2b2b2b;letter-spacing:0.2px">MPP</div>
<div class="t m" style="left:590.8px;top:497px;color:#2b2b2b;letter-spacing:0.2px">IMP</div>
<div class="t m" style="left:720.9px;top:497px;color:#2b2b2b;letter-spacing:0.2px">TP</div>
<div class="t m" style="left:850.8px;top:497px;color:#2b2b2b;letter-spacing:0.2px">Usługi</div>
<div class="t m" style="left:981.2px;top:497px;color:#2b2b2b;letter-spacing:0.2px">Dostawa</div>
<div class="t m" style="left:1110.7px;top:497px;color:#2b2b2b;letter-spacing:0.2px">Opis</div>
<div class="t m" style="left:1194.2px;top:497px;color:#2b2b2b;letter-spacing:0.2px">ID</div>
<div class="t m" style="left:461.2px;top:523px;width:123px;overflow:hidden;color:#2b2b2b;letter-spacing:0.2px">Podzielona płatność</div>
<div class="t m" style="left:590.8px;top:523px;color:#2b2b2b;letter-spacing:0.2px">Import towarów</div>
<div class="t m" style="left:720.9px;top:523px;color:#2b2b2b;letter-spacing:0.2px">Powiązania</div>
<div class="t m" style="left:850.8px;top:523px;color:#2b2b2b;letter-spacing:0.2px">turystyczne</div>
<div class="t m" style="left:981.2px;top:523px;color:#2b2b2b;letter-spacing:0.2px">dzieł sztuki</div>
<svg style="left:1240px;top:495px" width="20" height="20"><path d="M8.2 4.6L15.4 10L8.2 15.4" fill="none" stroke="#8a8a8a" stroke-width="1.3"/></svg>
<!-- row 2 -->
<div class="cb" style="left:8.4px;top:550px;width:15.5px;height:15.5px;border-width:1.5px;border-color:#b8b8b8"></div>
<div class="a" style="left:34px;top:545px;width:86px;height:26px;border:3px solid #0a7db8;background:#fff"></div>
<div class="t" style="left:43.8px;top:550px;color:#1a1a1a">FZKO</div>
<div class="t" style="left:213px;top:550px;color:#1a1a1a">VATRR/2020/1</div>
<div class="t" style="left:335px;top:550px;color:#1a1a1a">VAT_RR</div>
<div class="cb" style="left:514px;top:550px;width:15.5px;height:15.5px;border-width:2px;border-color:#d4d4d4"></div>
<div class="cb" style="left:643.3px;top:550px;width:15.5px;height:15.5px;border-width:2px;border-color:#d4d4d4"></div>
<div class="cb" style="left:773.6px;top:550px;width:15.5px;height:15.5px;border-width:2px;border-color:#d4d4d4"></div>
<div class="cb" style="left:903.3px;top:550px;width:15.5px;height:15.5px;border-width:2px;border-color:#d4d4d4"></div>
<div class="cb" style="left:1033.6px;top:550px;width:15.5px;height:15.5px;border-width:2px;border-color:#d4d4d4"></div>
<div class="a" style="left:1188px;top:545px;width:73px;height:24.5px;background:#fdfde3"></div>
<div class="t" style="left:1198.3px;top:550px;color:#1a1a1a">3063</div>
<svg style="left:320px;top:460px" width="140" height="126"><rect x="8.3" y="7.6" width="123.4" height="111" fill="none" stroke="#ec1c24" stroke-width="4.6"/></svg>

<!-- SCROLL 2 -->
<div class="hl" style="left:0;top:769px;width:1262px;background:#e6e6e6"></div>
<div class="a" style="left:13px;top:774px;width:1208px;height:9px;background:#e3e3e3"></div>

<svg style="left:0;top:765px" width="1262" height="22">
 <path d="M9 9L4.2 13L9 17" fill="none" stroke="#d4d4d4" stroke-width="1.1"/>
 <path d="M1251.6 9.4L1256.8 13.8L1251.6 18.2" fill="none" stroke="#d8d8d8" stroke-width="1.1"/>
</svg>
<!-- RIGHT PANEL -->
<div class="a" style="left:1262px;top:545px;width:319px;height:242px;background:#fff"></div>
<div class="a" style="left:1263px;top:544px;width:318px;height:1px;background:#bdbdbd"></div>
<div class="a" style="left:1261px;top:466px;width:2px;height:321px;background:#e2e2e2"></div>
<div class="vl" style="left:1563px;top:545px;height:242px;background:#e2e2e2"></div>
<div class="a" style="left:1568px;top:559px;width:9px;height:107px;background:#e3e3e3"></div>
<svg style="left:1563px;top:545px" width="18" height="242" fill="none" stroke="#d6d6d6" stroke-width="1.1">
 <path d="M5.4 11L9.4 7.2L13.4 11M5.4 233L9.4 237L13.4 233"/>
</svg>
<div class="t m" style="left:1276px;top:558px;color:#888;-webkit-text-stroke:0.35px #888">Dowód</div>
<div class="hl" style="left:1276px;top:581px;width:287px;background:#e0e0e0"></div>
<div class="t m" style="left:1305px;top:592px;width:100px;text-align:right;color:#1a1a1a">Numer</div>
<div class="t" style="left:1419.4px;top:592px;color:#9a9a9a;font-style:italic">brak danych</div>
<div class="t m" style="left:1305px;top:618px;width:100px;text-align:right;color:#1a1a1a">Opis</div>
<div class="t" style="left:1419.4px;top:618px;color:#9a9a9a;font-style:italic">brak danych</div>
<div class="a" style="left:1276px;top:641px;width:287px;height:2px;background:#dedede"></div>
<div class="t m" style="left:1285px;top:652px;width:120px;text-align:right;color:#1a1a1a;letter-spacing:0.3px">Faktura Numer</div>
<div class="t" style="left:1419.4px;top:652px;color:#1a1a1a">VATRR/2020/1</div>
<div class="t m" style="left:1285px;top:678px;width:120px;text-align:right;color:#1a1a1a;letter-spacing:0.15px">Typ dokumentu</div>
<div class="t" style="left:1419.4px;top:678px;color:#1a1a1a">VAT_RR</div>
<div class="t m" style="left:1276px;top:735px;color:#888;-webkit-text-stroke:0.35px #888;letter-spacing:0.22px">Rodzaje transakcji</div>
<div class="hl" style="left:1276px;top:758px;width:287px;background:#e0e0e0"></div>
<div class="t m" style="left:1285px;top:768px;width:120.5px;text-align:right;color:#1a1a1a;letter-spacing:0.2px">MPP Podzielona</div>
<div class="cb" style="left:1419.7px;top:777.8px;width:14px;height:14px;border-width:2px;border-color:#d4d4d4"></div>

<!-- BORDERS -->
<div class="a" style="left:1581px;top:0;width:1px;height:788px;background:#00a4e3"></div>
<div class="a" style="left:0;top:787px;width:1582px;height:1px;background:#00a4e3"></div>
</body></html>
